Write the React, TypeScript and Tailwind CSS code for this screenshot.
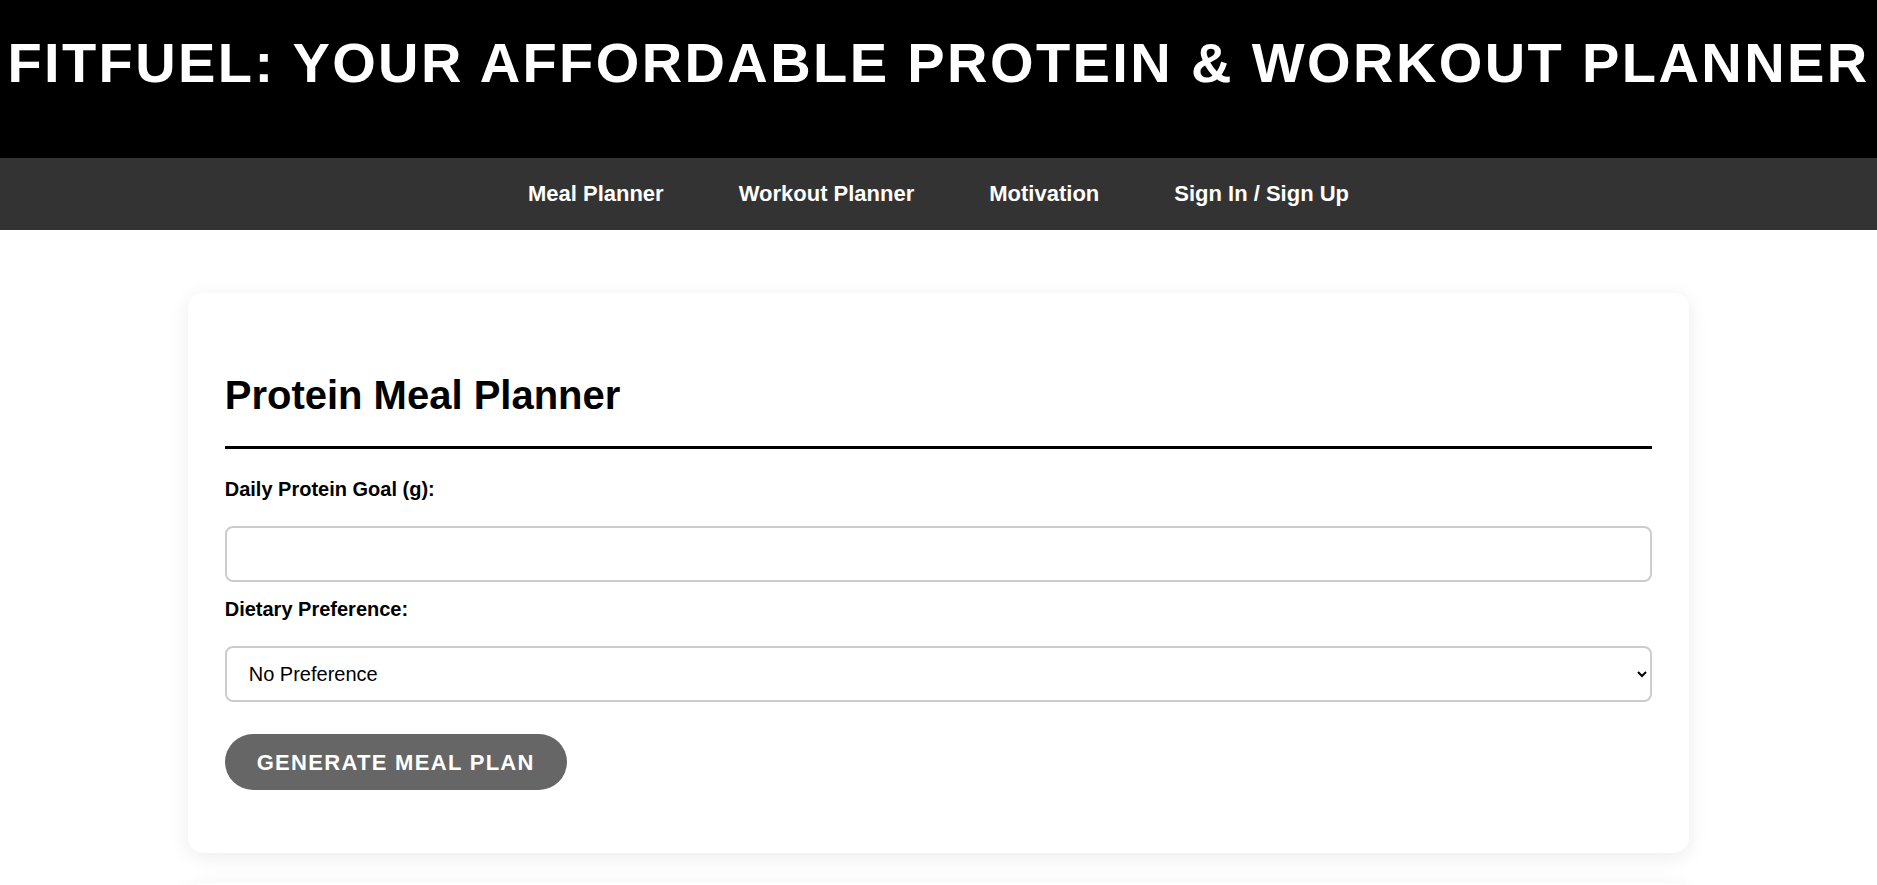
import React, { useState } from 'react';

const navLinks = ['Meal Planner', 'Workout Planner', 'Motivation', 'Sign In / Sign Up'];

const App = () => {
  const [goal, setGoal] = useState('');
  const [diet, setDiet] = useState('none');

  return (
    <div className="min-h-screen bg-white font-['Liberation_Sans',Arial,sans-serif] text-black">
      <header className="h-[158px] bg-black pt-[31px] flex justify-center">
        <h1 className="text-[56px] leading-[64px] font-bold tracking-[2.4px] uppercase text-white whitespace-nowrap">
          FitFuel: Your Affordable Protein &amp; Workout Planner
        </h1>
      </header>

      <nav className="h-[72px] bg-[#333] flex items-center justify-center gap-[75px] pb-[1px]">
        {navLinks.map((link) => (
          <a key={link} href="#" className="text-[22px] font-bold text-white">
            {link}
          </a>
        ))}
      </nav>

      <main className="pt-[63px] pb-10">
        <section className="mx-auto w-[80%] bg-white rounded-[15px] shadow-[0_4px_20px_rgba(0,0,0,0.08)] px-[37px] pt-[79px] pb-[63px]">
          <h2 className="text-[40px] leading-[46px] font-bold pb-[28px] border-b-[3px] border-black">
            Protein Meal Planner
          </h2>

          <label htmlFor="goal" className="block mt-[29px] mb-[25px] text-[20px] leading-[23px] font-bold">
            Daily Protein Goal (g):
          </label>
          <input
            id="goal"
            type="number"
            value={goal}
            onChange={(e) => setGoal(e.target.value)}
            className="block w-full h-[56px] border-2 border-[#ccc] rounded-[8px] px-[18px] text-[20px] outline-none"
          />

          <label htmlFor="diet" className="block mt-[16px] mb-[25px] text-[20px] leading-[23px] font-bold">
            Dietary Preference:
          </label>
          <select
            id="diet"
            value={diet}
            onChange={(e) => setDiet(e.target.value)}
            className="block w-full h-[56px] border-2 border-[#ccc] rounded-[8px] pl-[18px] pr-[4px] text-[20px] bg-white outline-none"
          >
            <option value="none">No Preference</option>
            <option value="vegetarian">Vegetarian</option>
            <option value="vegan">Vegan</option>
          </select>

          <button className="mt-[32px] h-[56px] px-[32px] rounded-full bg-[#666] text-white text-[22px] font-bold uppercase tracking-[1.3px]">
            Generate Meal Plan
          </button>
        </section>

        <section className="mx-auto mt-[30px] w-[80%] min-h-[200px] bg-white rounded-[15px] shadow-[0_4px_20px_rgba(0,0,0,0.08)]" />
      </main>
    </div>
  );
};

export default App;
